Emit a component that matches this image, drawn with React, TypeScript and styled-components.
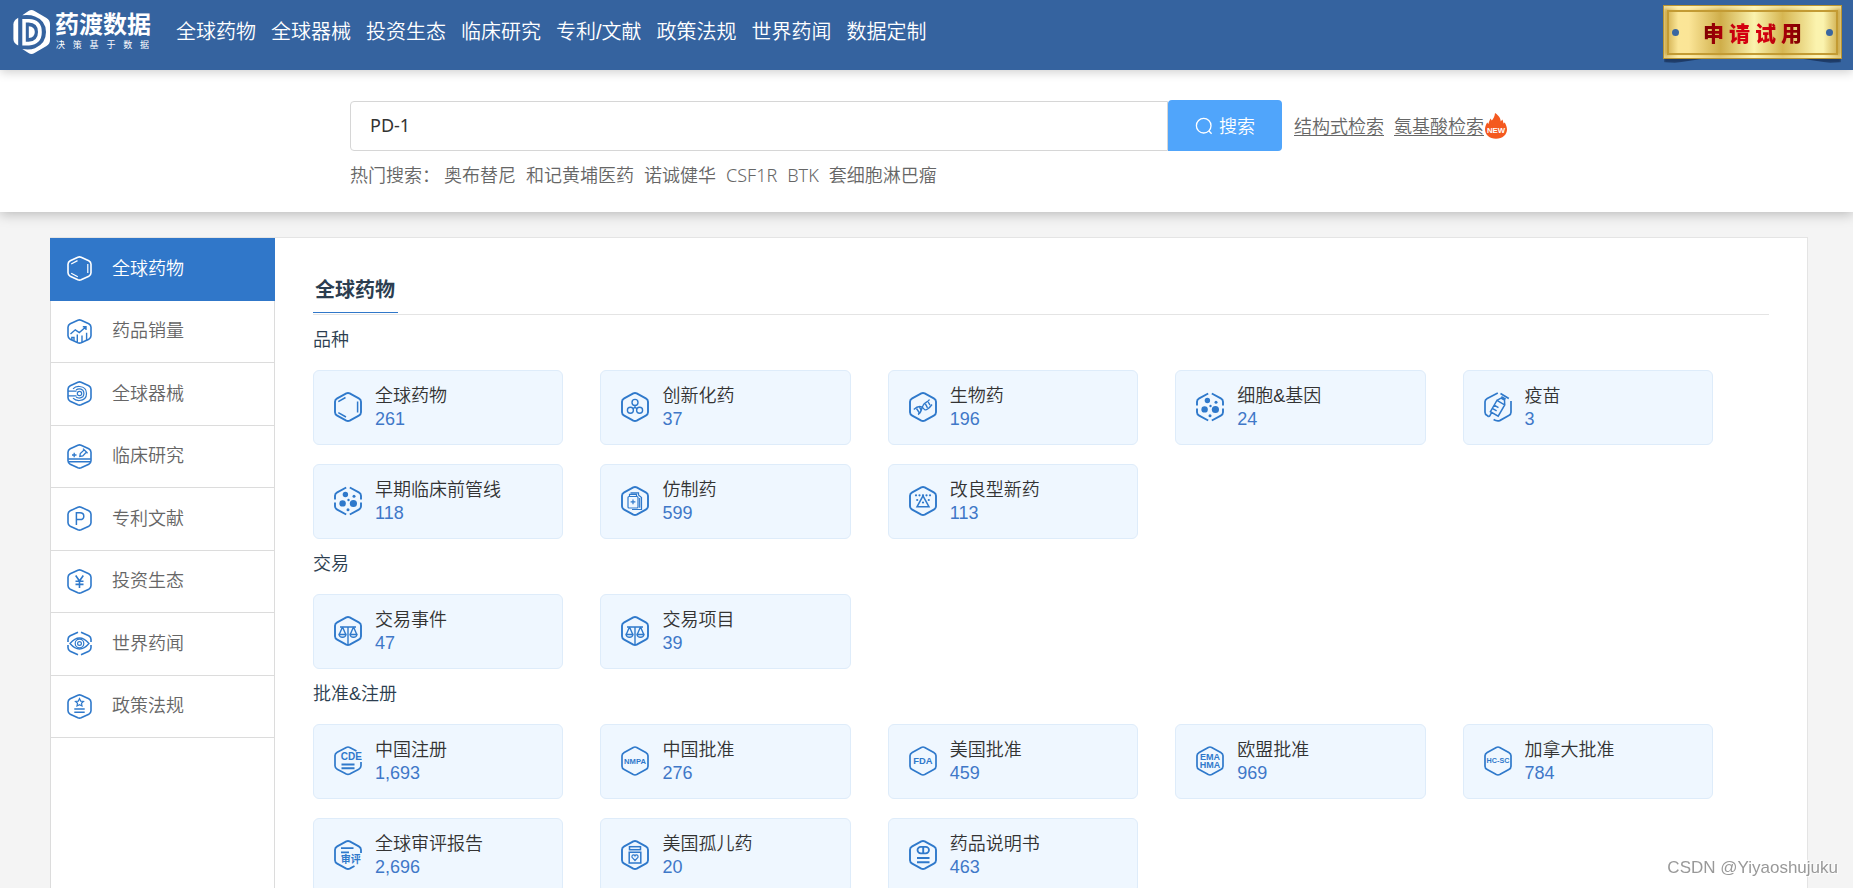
import React from "react";
import styled, { createGlobalStyle } from "styled-components";

const GlobalStyle = createGlobalStyle`
  *, *::before, *::after { box-sizing: border-box; }
  body {
    margin: 0;
    background: #f4f4f4;
    color: #2c3e50;
    font-family: "Liberation Sans", "Noto Sans CJK SC", sans-serif;
    font-size: 18px;
    font-weight: 350;
    line-height: 24px;
    scrollbar-width: none;
  }
  a { color: inherit; text-decoration: none; }
  ul { list-style: none; margin: 0; padding: 0; }
`;

/* ---------- header ---------- */

const Header = styled.header`
  position: relative;
  display: flex;
  align-items: flex-start;
  height: 70px;
  padding: 0 11px 0 13px;
  background: #35639f;
  box-shadow: 0 2px 10px rgba(0, 0, 0, 0.2);
`;

const Brand = styled.a`
  display: flex;
  align-items: center;
  gap: 4px;
  height: 64px;
  color: #fff;
`;

const BrandText = styled.span`
  display: flex;
  flex-direction: column;
  width: 96px;
`;

const BrandName = styled.span`
  font-size: 24px;
  font-weight: 700;
  line-height: 26px;
  white-space: nowrap;
`;

const Slogan = styled.span`
  display: flex;
  justify-content: space-between;
  padding: 0 2px 0 1px;
  font-size: 9px;
  font-weight: 400;
  line-height: 14px;
`;

const Nav = styled.nav`
  display: flex;
  flex: 1;
  gap: 15px;
  margin-left: 25px;
  height: 64px;
  align-items: center;
  color: #fff;
  font-size: 20px;
  white-space: nowrap;
`;

const TrialWrap = styled.div`
  position: relative;
  z-index: 0;
  padding-top: 5px;
`;

const TrialButton = styled.button`
  position: relative;
  display: flex;
  align-items: center;
  justify-content: center;
  width: 179px;
  height: 54px;
  padding: 0;
  border: 1px solid #b99430;
  background: linear-gradient(90deg, #c9a440 0%, #fbe697 8%, #fbe597 14%, #cfae4a 32%, #fbf3ae 51%, #d6b652 67%, #fbf3ae 86%, #fbf3ae 90%, #c9a440 100%);
  box-shadow: inset 0 3px 3px rgba(255, 248, 200, 0.6), inset 0 -3px 3px rgba(255, 248, 200, 0.4);
  cursor: pointer;

  &::before, &::after {
    content: "";
    position: absolute;
    z-index: -1;
    bottom: -5px;
    width: 54px;
    height: 8px;
    background: #1d3a66;
    filter: blur(1px);
  }
  &::before { left: 0; clip-path: polygon(0 0, 100% 0, 100% 20%, 20% 100%, 0 90%); }
  &::after { right: 0; clip-path: polygon(0 0, 100% 0, 100% 90%, 80% 100%, 0 20%); }
`;

const TrialFrame = styled.span`
  display: flex;
  align-items: center;
  justify-content: space-between;
  width: 171px;
  height: 45px;
  padding: 0 3px;
  border: 2px solid #c39b33;
`;

const Rivet = styled.span`
  width: 7px;
  height: 7px;
  border-radius: 50%;
  background: #3a66a0;
`;

const TrialLabel = styled.span`
  display: flex;
  gap: 5px;
  font-family: "Noto Sans CJK SC", sans-serif;
  font-size: 21px;
  font-weight: 900;
  line-height: 30px;
  color: transparent;
  background: linear-gradient(90deg, #7c0000, #d40010 36%, #d40010 62%, #7c0000);
  background-clip: text;
  -webkit-background-clip: text;
`;

/* ---------- search ---------- */

const SearchPanel = styled.section`
  display: flex;
  flex-direction: column;
  height: 142px;
  padding: 30px 40px 0 350px;
  background: #fff;
  box-shadow: 0 2px 12px rgba(0, 0, 0, 0.25);
  color: #666;
  font-family: "Noto Sans", "Noto Sans CJK SC", sans-serif;
`;

const SearchForm = styled.form`
  display: flex;
  align-items: flex-end;
`;

const SearchInput = styled.input`
  flex: 0 1 818px;
  min-width: 0;
  height: 50px;
  padding: 0 19px 2px;
  border: 1px solid #d6d6d6;
  border-radius: 4px 0 0 4px;
  outline: none;
  background: #fff;
  color: #333;
  font: inherit;
  font-weight: 400;
`;

const SearchButton = styled.button`
  display: flex;
  align-items: center;
  justify-content: center;
  gap: 6px;
  width: 114px;
  height: 51px;
  padding: 0;
  border: 0;
  border-radius: 4px;
  border-bottom-left-radius: 0;
  background: #50a5fb;
  color: #fff;
  font: inherit;
  cursor: pointer;
`;

const SearchLinks = styled.div`
  display: flex;
  align-items: center;
  gap: 10px;
  height: 50px;
  margin-left: 12px;
  white-space: nowrap;

  a { text-decoration: underline; text-underline-offset: 2px; }
`;

const FlaggedLink = styled.span`
  display: flex;
  align-items: center;
`;

const HotSearch = styled.div`
  display: flex;
  gap: 10px;
  margin-top: 12px;
  white-space: nowrap;
`;

const HotLabel = styled.span`
  margin-right: -6px;
`;

/* ---------- body ---------- */

const Workspace = styled.main`
  display: flex;
  min-height: 680px;
  margin: 25px 45px 0 50px;
  border: 1px solid #e4e4e4;
  border-bottom: 0;
  background: #fff;
`;

const Sidebar = styled.aside`
  flex: 0 0 225px;
  margin-left: -1px;
  border: solid #dcdcdc;
  border-width: 0 1px;
`;

const Menu = styled.ul`
  display: grid;
  grid-auto-rows: 1fr;
  min-height: 500px;
  margin: 0 -1px;
`;

const MenuItem = styled.li<{ $active?: boolean }>`
  display: flex;
  border: 1px solid ${(p) => (p.$active ? "#3077c9" : "#dcdcdc")};
  border-top: 0;
  background: ${(p) => (p.$active ? "#3077c9" : "#fff")};
  color: ${(p) => (p.$active ? "#fff" : "#666")};

  a {
    display: flex;
    flex: 1;
    align-items: center;
    gap: 20px;
    padding-left: 16px;
  }
  svg { color: ${(p) => (p.$active ? "#fff" : "#2f79cb")}; }
`;

const Content = styled.div`
  flex: 1;
  min-width: 0;
  padding: 37px 38px 30px;
`;

const TitleBar = styled.div`
  display: flex;
  padding-bottom: 1px;
  border-bottom: 1px solid #e4e4e4;
`;

const Title = styled.h2`
  margin: 0;
  padding: 0 3px 7px 2px;
  border-bottom: 1px solid #3077c9;
  font-size: 20px;
  font-weight: 700;
  line-height: 30px;
`;

const GroupTitle = styled.h3`
  margin: 0 0 5px;
  font-size: 18px;
  font-weight: inherit;
  line-height: 50px;
`;

const CardGrid = styled.div`
  display: grid;
  grid-template-columns: repeat(5, 1fr);
  gap: 19px 37px;
  padding-right: 56px;
`;

const Card = styled.a`
  display: flex;
  align-items: center;
  gap: 13px;
  height: 75px;
  padding: 0 0 1px 20px;
  border: 1px solid #deecfa;
  border-radius: 6px;
  background: #eff7ff;

  svg { color: #2f79cb; }
`;

const CardText = styled.span`
  display: flex;
  flex-direction: column;
`;

const CardLabel = styled.span`
  color: #333;
  line-height: 24px;
`;

const CardCount = styled.span`
  color: #3f78c8;
  line-height: 22px;
`;

const Watermark = styled.div`
  position: fixed;
  right: 15px;
  bottom: 8px;
  color: #999;
  font-size: 17px;
  text-shadow: 1px 1px 1px #fff, -1px -1px 1px #fff;
`;

/* ---------- drawings ---------- */

const HEX =
  "M12.3 1.4Q14 .6 15.7 1.4L24.8 6.4Q27 7.6 27 9.8V20.2Q27 22.4 24.8 23.6L15.7 28.6Q14 29.4 12.3 28.6L3.2 23.6Q1 22.4 1 20.2V9.8Q1 7.6 3.2 6.4Z";
const HEX_SPLIT =
  "M12.2 1.5L3.2 6.4Q1 7.6 1 9.8V13.5M15.8 1.5L24.8 6.4Q27 7.6 27 9.8V13.5M27 16.5V20.2Q27 22.4 24.8 23.6L15.8 28.5M12.2 28.5L3.2 23.6Q1 22.4 1 20.2V16.5";
const HEX_SMALL =
  "M10.9 1.2Q12.5 .5 14.1 1.2L21.8 4.8Q24 6 24 8.2V16.8Q24 19 21.8 20.2L14.1 23.8Q12.5 24.5 10.9 23.8L3.2 20.2Q1 19 1 16.8V8.2Q1 6 3.2 4.8Z";
const HEX_SMALL_SPLIT =
  "M11 1.2L3.2 4.8Q1 6 1 8.2V11M14 1.2L21.8 4.8Q24 6 24 8.2V11M24 14V16.8Q24 19 21.8 20.2L14 23.8M11 23.8L3.2 20.2Q1 19 1 16.8V14";

const labelFont = { fontFamily: "Liberation Sans, sans-serif", fontWeight: 700 } as const;

const cardGlyphs: Record<string, React.ReactNode> = {
  benzene: (
    <>
      <path d={HEX} strokeWidth="1.9" />
      <path d="M4.3 9.6L11.5 5.5M23.6 9.5V20.5M4.3 20.6L12 25" strokeWidth="1.5" />
    </>
  ),
  molecule: (
    <>
      <path d={HEX} strokeWidth="1.9" />
      <g strokeWidth="1.4">
        <circle cx="14" cy="10.4" r="3" />
        <circle cx="9.4" cy="18.3" r="3" />
        <circle cx="18.6" cy="18.3" r="3" />
        <path d="M14 13.4V15.4L12 16.7M14 15.4L16 16.7" />
      </g>
    </>
  ),
  dna: (
    <>
      <path d={HEX} strokeWidth="1.9" />
      <g strokeWidth="1.4">
        <path d="M4.8 17.5C9 13.5 13 13.8 15 17C16.5 19.5 20.5 16 23 12.5M9 22.5C12.5 21 12 17.5 14 13.5C15.5 10 19 10.5 20.5 7.5" />
        <path d="M7.5 16.5L10.5 21M10.5 15.2L12.3 18.3M16.4 11.8L18.5 15.8M19.2 10L21 13.2" />
      </g>
    </>
  ),
  cells: (
    <>
      <path d={HEX_SPLIT} strokeWidth="1.9" />
      <g fill="currentColor" stroke="none">
        <circle cx="8.6" cy="17.4" r="3.2" />
        <circle cx="19.4" cy="17.5" r="3.6" />
        <circle cx="11.4" cy="8.5" r="2.7" />
        <circle cx="20" cy="10.2" r="1.5" />
        <circle cx="14.5" cy="14" r="1.2" />
        <circle cx="14" cy="23.7" r="1.5" />
      </g>
    </>
  ),
  vaccine: (
    <>
      <path d="M13.8 1L3.2 6.4Q1 7.6 1 9.8V20.2Q1 22.4 3.2 23.6L4.8 24.7M16.5 1.6L24.8 6.6M27 9V20.2Q27 22.4 24.8 23.6L15.7 28.6Q13 29.6 9.6 27.6" strokeWidth="1.7" />
      <g strokeWidth="1.5" transform="translate(14.3 15) rotate(30)">
        <path d="M-4.5 -5H4.5V8H-4.5ZM-4.5 -5L-2 -9H2L4.5 -5M-2.5 -10.5H2.5M-4.5 .5H.5M-4.5 4.2H.5M-3 8V13" />
      </g>
    </>
  ),
  generic: (
    <>
      <path d={HEX} strokeWidth="1.9" />
      <g strokeWidth="1.2">
        <rect x="7" y="10.5" width="10" height="11.5" rx="1" />
        <path d="M8.5 10.5V8.3H15.5V10.5M9.5 6.8H17.5V9L20.5 11.5V23.5H11M18.7 12V21.8M9.6 15.8H14.4M12 13.4V18.2" />
      </g>
    </>
  ),
  improved: (
    <>
      <path d={HEX} strokeWidth="1.9" />
      <path d="M14 9.8L20 20.8H8Z" strokeWidth="1.5" />
      <g fill="currentColor" stroke="none">
        {[7, 10.5, 14, 17.5, 21].map((x) => <circle key={x} cx={x} cy="9.3" r="1.1" />)}
        <circle cx="8.2" cy="14" r="1.1" />
        <circle cx="19.8" cy="14" r="1.1" />
        <circle cx="14" cy="16.5" r="1.1" />
      </g>
    </>
  ),
  scales: (
    <>
      <path d={HEX} strokeWidth="1.9" />
      <g strokeWidth="1.4">
        <path d="M6 11H22M14 11V29" />
        <path d="M8.5 11L5.2 18.5M8.5 11L11.8 18.5M5 18.5H12Q11.5 21.3 8.5 21.3Q5.5 21.3 5 18.5Z" />
        <path d="M19.5 11L16.2 18.5M19.5 11L22.8 18.5M16 18.5H23Q22.5 21.3 19.5 21.3Q16.5 21.3 16 18.5Z" />
      </g>
    </>
  ),
  cde: (
    <>
      <path d="M22.5 4.9L15.7 1.4Q14 .6 12.3 1.4L3.2 6.2Q1 7.4 1 9.6V19.8Q1 22 3.2 23.2L12.3 28Q14 28.8 15.7 28L24.8 23.2Q27 22 27 19.8V16" strokeWidth="1.7" />
      <path d="M7.5 18.5H20.5M7.5 22.2H20.5" strokeWidth="1.9" />
      <text x="17.4" y="13.8" fontSize="10" textAnchor="middle" fill="currentColor" stroke="none" {...labelFont}>CDE</text>
    </>
  ),
  nmpa: (
    <>
      <path d={HEX} strokeWidth="1.7" />
      <text x="14" y="17.5" fontSize="7.6" textAnchor="middle" fill="currentColor" stroke="none" {...labelFont}>NMPA</text>
    </>
  ),
  fda: (
    <>
      <path d={HEX} strokeWidth="1.7" />
      <text x="14" y="18.2" fontSize="9.4" textAnchor="middle" fill="currentColor" stroke="none" {...labelFont}>FDA</text>
    </>
  ),
  ema: (
    <>
      <path d={HEX} strokeWidth="1.7" />
      <text x="14" y="13.8" fontSize="9" textAnchor="middle" fill="currentColor" stroke="none" {...labelFont}>EMA</text>
      <text x="14" y="22.2" fontSize="9" textAnchor="middle" fill="currentColor" stroke="none" {...labelFont}>HMA</text>
    </>
  ),
  hcsc: (
    <>
      <path d={HEX} strokeWidth="1.7" />
      <text x="14" y="17.3" fontSize="7.2" textAnchor="middle" fill="currentColor" stroke="none" {...labelFont}>HC-SC</text>
    </>
  ),
  review: (
    <>
      <path d="M27 13V9.8Q27 7.6 24.8 6.4L15.7 1.4Q14 .6 12.3 1.4L3.2 6.4Q1 7.6 1 9.8V20.2Q1 22.4 3.2 23.6L12.3 28.6Q14 29.4 15.7 28.6L20.5 26" strokeWidth="1.8" />
      <path d="M7 8.2H19.5M7 12.4H15" strokeWidth="1.7" />
      <text x="16.8" y="23.3" fontSize="10" fontWeight="700" textAnchor="middle" fill="currentColor" stroke="none" fontFamily="Noto Sans CJK SC, sans-serif">审评</text>
    </>
  ),
  orphan: (
    <>
      <path d={HEX} strokeWidth="1.9" />
      <g strokeWidth="1.5">
        <rect x="8.5" y="6.7" width="11" height="3" />
        <path d="M8.2 12.2H19.8V23H8.2Z" />
        <path d="M14 20.5L11 17.3Q10.6 14.9 12.6 14.9Q13.6 14.9 14 15.9Q14.4 14.9 15.4 14.9Q17.4 14.9 17 17.3Z" strokeWidth="1.2" />
      </g>
    </>
  ),
  leaflet: (
    <>
      <path d={HEX} strokeWidth="1.9" />
      <rect x="8.5" y="6.8" width="11.5" height="6.6" rx="3.3" strokeWidth="1.8" />
      <path d="M14.2 7V13.4M8 18H20.5M8 22.2H20.5" strokeWidth="1.9" />
    </>
  ),
};

const menuGlyphs: Record<string, React.ReactNode> = {
  benzene: (
    <>
      <path d={HEX_SMALL} />
      <path d="M4.2 8L10.5 4.6M20.8 8V17M4.2 17.2L10.8 20.8" strokeWidth="1.2" />
    </>
  ),
  sales: (
    <>
      <path d={HEX_SMALL} />
      <path d="M3.5 15L8.3 10.8L12.3 13.5L18.7 8M15.8 7.8H19V11M4.8 21V18.5H7V21.5M10.3 23V15.5M15 23.5V16.5M19.6 21.5V13.8" strokeWidth="1.4" />
    </>
  ),
  device: (
    <>
      <path d={HEX_SMALL} />
      <g strokeWidth="1.2">
        <path d="M1 10.2H9.5M1 14.8H9.5M6 7.8Q8.5 5.2 12.5 5.5Q19.5 6 19.5 12.5Q19.5 19 12.5 19.5Q8.5 19.8 6 17.2" />
        <path d="M9 9Q12.5 6.8 15.8 9.2Q18 12.5 15.8 15.8Q12.5 18.2 9 16" />
        <circle cx="12.5" cy="12.5" r="2.2" />
      </g>
    </>
  ),
  clinical: (
    <>
      <path d={HEX_SMALL} />
      <path d="M1.2 15H23.8M2 17.8H23" strokeWidth="1.4" />
      <path d="M5 11H9.5M7.2 8.8V13.2M12.8 12.5L13.3 9.5L17.2 5.8L19.5 8L15.8 11.9ZM16 4.6L20.6 9.2" strokeWidth="1.3" />
    </>
  ),
  patent: (
    <>
      <path d={HEX_SMALL} />
      <path d="M9.4 19V6.8H13Q16.8 6.8 16.8 10.2Q16.8 13.6 13 13.6H9.4" strokeWidth="1.5" />
    </>
  ),
  invest: (
    <>
      <path d={HEX_SMALL} />
      <path d="M8.7 6.5L12.5 12L16.3 6.5M12.5 12V19M8.5 12.2H16.5M8.5 15.4H16.5" strokeWidth="1.6" />
    </>
  ),
  news: (
    <>
      <path d={HEX_SMALL_SPLIT} />
      <path d="M3 12.5Q12.5 1.5 22 12.5Q12.5 23.5 3 12.5Z" strokeWidth="1.3" />
      <circle cx="12.5" cy="12.5" r="4.3" strokeWidth="1.2" />
      <circle cx="12.5" cy="12.5" r="1.9" strokeWidth="1.2" />
    </>
  ),
  policy: (
    <>
      <path d={HEX_SMALL} />
      <path d="M12.5 4.6L13.7 7.1L16.5 7.4L14.5 9.3L15 12L12.5 10.7L10 12L10.5 9.3L8.5 7.4L11.3 7.1Z" strokeWidth="1.2" />
      <path d="M7.3 15H17.7M7.3 18.3H17.7" strokeWidth="1.5" />
    </>
  ),
};

const CardIcon = ({ name }: { name: string }) => (
  <svg width="28" height="30" viewBox="0 0 28 30" fill="none" stroke="currentColor" aria-hidden="true">
    {cardGlyphs[name]}
  </svg>
);

const MenuIcon = ({ name }: { name: string }) => (
  <svg width="25" height="25" viewBox="0 0 25 25" fill="none" stroke="currentColor" strokeWidth="1.6" aria-hidden="true">
    {menuGlyphs[name]}
  </svg>
);

const LogoMark = () => (
  <svg width="38" height="44" viewBox="0 0 38 44" fill="#fff" aria-hidden="true">
    <path d="M5.2 7.8V35.6Q.4 33 .4 29V14.5Q.4 10.5 5.2 7.8Z" />
    <path d="M9.3 5.2L15.5 1Q18.5-.8 21.5 1L33.5 8Q37 10.2 37 14V30Q37 33.8 33.5 36L21.5 43Q18.5 44.8 15.5 43L9.3 39Q17 40.2 22 38.2Q33 33.5 33 22Q33 10.5 22 6.4Q17 4.3 9.3 5.2Z" />
    <path d="M9.3 9H16Q28.8 9.5 28.8 22Q28.8 34.5 16 35.4H9.3ZM12.8 12.6V31.8H15.6Q25 31 25 22Q25 13 15.6 12.6Z" fillRule="evenodd" />
    <path d="M15.8 16.2Q21.8 16.6 21.8 22Q21.8 27.4 15.8 28Z" />
  </svg>
);

const SearchIcon = () => (
  <svg width="18" height="18" viewBox="0 0 18 18" fill="none" stroke="#fff" strokeWidth="1.3" aria-hidden="true">
    <circle cx="8.7" cy="8.7" r="7.3" />
    <path d="M13.8 13.8L16.6 16.8" />
  </svg>
);

const NewFlame = () => (
  <svg width="24" height="26" viewBox="0 0 24 26" role="img" aria-label="NEW">
    <path d="M11 0C15.5 3 16.5 5.5 16.8 8.5L18.3 6.5C19 8 19.3 9 19.5 10.5L20.8 9.5C22 12 23 14 23 16.5C23 21.5 18.5 25.8 12 25.8C5.5 25.8 1 21.5 1 16.5C1 13.5 2 11.5 3.2 9.5L4.4 11C5 9 5.5 7.5 6.5 5.5L7.8 7.5C9.5 5.5 10.8 3.5 11 0Z" fill="#f4591f" />
    <text x="12" y="19.5" fontSize="7.8" textAnchor="middle" fill="#fff" {...labelFont}>NEW</text>
  </svg>
);

/* ---------- data ---------- */

const navItems = ["全球药物", "全球器械", "投资生态", "临床研究", "专利/文献", "政策法规", "世界药闻", "数据定制"];
const hotWords = ["奥布替尼", "和记黄埔医药", "诺诚健华", "CSF1R", "BTK", "套细胞淋巴瘤"];

const menu = [
  { label: "全球药物", icon: "benzene" },
  { label: "药品销量", icon: "sales" },
  { label: "全球器械", icon: "device" },
  { label: "临床研究", icon: "clinical" },
  { label: "专利文献", icon: "patent" },
  { label: "投资生态", icon: "invest" },
  { label: "世界药闻", icon: "news" },
  { label: "政策法规", icon: "policy" },
];

const groups = [
  {
    title: "品种",
    cards: [
      { label: "全球药物", count: "261", icon: "benzene" },
      { label: "创新化药", count: "37", icon: "molecule" },
      { label: "生物药", count: "196", icon: "dna" },
      { label: "细胞&基因", count: "24", icon: "cells" },
      { label: "疫苗", count: "3", icon: "vaccine" },
      { label: "早期临床前管线", count: "118", icon: "cells" },
      { label: "仿制药", count: "599", icon: "generic" },
      { label: "改良型新药", count: "113", icon: "improved" },
    ],
  },
  {
    title: "交易",
    cards: [
      { label: "交易事件", count: "47", icon: "scales" },
      { label: "交易项目", count: "39", icon: "scales" },
    ],
  },
  {
    title: "批准&注册",
    cards: [
      { label: "中国注册", count: "1,693", icon: "cde" },
      { label: "中国批准", count: "276", icon: "nmpa" },
      { label: "美国批准", count: "459", icon: "fda" },
      { label: "欧盟批准", count: "969", icon: "ema" },
      { label: "加拿大批准", count: "784", icon: "hcsc" },
      { label: "全球审评报告", count: "2,696", icon: "review" },
      { label: "美国孤儿药", count: "20", icon: "orphan" },
      { label: "药品说明书", count: "463", icon: "leaflet" },
    ],
  },
];

const spread = (text: string) => Array.from(text).map((ch, i) => <span key={i}>{ch}</span>);

export default function App() {
  return (
    <>
      <GlobalStyle />
      <Header>
        <Brand href="#">
          <LogoMark />
          <BrandText>
            <BrandName>药渡数据</BrandName>
            <Slogan>{spread("决策基于数据")}</Slogan>
          </BrandText>
        </Brand>
        <Nav>
          {navItems.map((item) => (
            <a key={item} href="#">{item}</a>
          ))}
        </Nav>
        <TrialWrap>
          <TrialButton type="button">
            <TrialFrame>
              <Rivet />
              <TrialLabel>{spread("申请试用")}</TrialLabel>
              <Rivet />
            </TrialFrame>
          </TrialButton>
        </TrialWrap>
      </Header>

      <SearchPanel>
        <SearchForm onSubmit={(e) => e.preventDefault()}>
          <SearchInput type="text" aria-label="搜索" defaultValue="PD-1" />
          <SearchButton type="submit">
            <SearchIcon />
            搜索
          </SearchButton>
          <SearchLinks>
            <a href="#">结构式检索</a>
            <FlaggedLink>
              <a href="#">氨基酸检索</a>
              <NewFlame />
            </FlaggedLink>
          </SearchLinks>
        </SearchForm>
        <HotSearch>
          <HotLabel>热门搜索：</HotLabel>
          {hotWords.map((word) => (
            <a key={word} href="#">{word}</a>
          ))}
        </HotSearch>
      </SearchPanel>

      <Workspace>
        <Sidebar>
          <Menu>
            {menu.map((item, i) => (
              <MenuItem key={item.label} $active={i === 0}>
                <a href="#">
                  <MenuIcon name={item.icon} />
                  {item.label}
                </a>
              </MenuItem>
            ))}
          </Menu>
        </Sidebar>
        <Content>
          <TitleBar>
            <Title>全球药物</Title>
          </TitleBar>
          {groups.map((group) => (
            <section key={group.title}>
              <GroupTitle>{group.title}</GroupTitle>
              <CardGrid>
                {group.cards.map((card) => (
                  <Card key={card.label} href="#">
                    <CardIcon name={card.icon} />
                    <CardText>
                      <CardLabel>{card.label}</CardLabel>
                      <CardCount>{card.count}</CardCount>
                    </CardText>
                  </Card>
                ))}
              </CardGrid>
            </section>
          ))}
        </Content>
      </Workspace>
      <Watermark>CSDN @Yiyaoshujuku</Watermark>
    </>
  );
}
